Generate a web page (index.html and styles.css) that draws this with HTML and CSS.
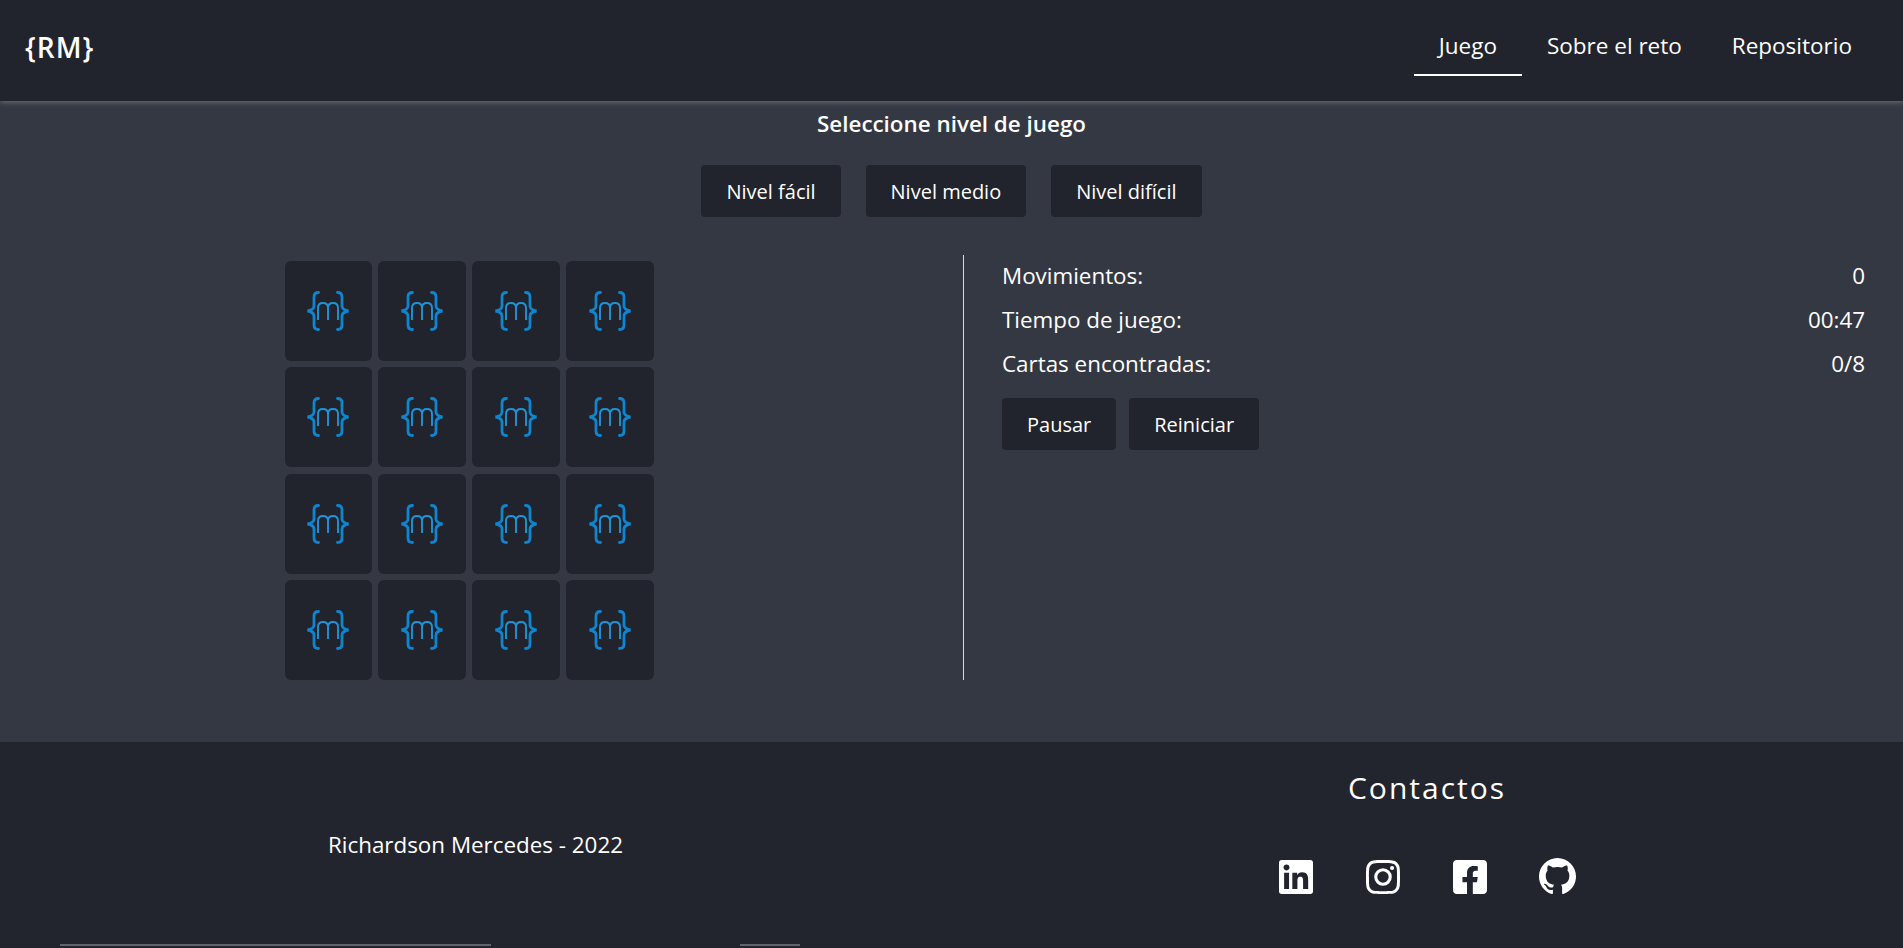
FILE: index.html
```html
<!DOCTYPE html>
<html lang="es">

<head>
    <meta charset="UTF-8">
    <meta name="viewport" content="width=device-width, initial-scale=1.0">
    <title>Juego de memoria</title>
    <link rel="stylesheet" href="styles.css">
</head>

<body>
    <header class="navbar">
        <a class="brand" href="#">{RM}</a>
        <nav class="nav-links">
            <a class="nav-link active" href="#">Juego</a>
            <a class="nav-link" href="#">Sobre el reto</a>
            <a class="nav-link" href="#">Repositorio</a>
        </nav>
    </header>

    <main class="content">
        <h1 class="level-title">Seleccione nivel de juego</h1>
        <div class="level-buttons">
            <button class="btn">Nivel fácil</button>
            <button class="btn">Nivel medio</button>
            <button class="btn">Nivel difícil</button>
        </div>

        <section class="game">
            <div class="board-side">
                <div class="board" id="board"></div>
            </div>
            <div class="stats-side">
                <div class="stat"><span>Movimientos:</span><span>0</span></div>
                <div class="stat"><span>Tiempo de juego:</span><span>00:47</span></div>
                <div class="stat"><span>Cartas encontradas:</span><span>0/8</span></div>
                <div class="stat-buttons">
                    <button class="btn">Pausar</button>
                    <button class="btn">Reiniciar</button>
                </div>
            </div>
        </section>
    </main>

    <footer class="footer">
        <div class="footer-left">
            <p>Richardson Mercedes - 2022</p>
        </div>
        <div class="footer-right">
            <h2 class="contact-title">Contactos</h2>
            <div class="socials">
                <a href="#" aria-label="LinkedIn">
                    <svg viewBox="0 0 24 24"><path d="M22.2 0H1.8C.8 0 0 .8 0 1.7v20.6C0 23.2.8 24 1.8 24h20.4c1 0 1.8-.8 1.8-1.7V1.7C24 .8 23.2 0 22.2 0zM7.1 20.5H3.6V9h3.5v11.5zM5.300 7.400c-1.100 0-2.100-.9-2.100-2.100s.9-2.100 2.100-2.100 2.100.9 2.100 2.100-1 2.100-2.100 2.100zm15.200 13.100H17v-5.600c0-1.300 0-3-1.900-3s-2.100 1.400-2.100 2.900v5.700H9.400V9h3.400v1.600h.1c.5-.9 1.600-1.900 3.400-1.900 3.600 0 4.300 2.400 4.300 5.500v6.300z"/></svg>
                </a>
                <a href="#" aria-label="Instagram">
                    <svg viewBox="0 0 24 24"><path d="M12 2.200c3.200 0 3.600 0 4.900.1 1.200.1 1.800.2 2.200.4.6.2 1 .5 1.400.9.4.4.7.8.9 1.400.2.4.4 1 .4 2.200.1 1.300.1 1.700.1 4.900s0 3.600-.1 4.900c-.1 1.200-.2 1.800-.4 2.200-.2.6-.5 1-.9 1.400-.4.4-.8.7-1.400.9-.4.2-1 .4-2.200.4-1.300.1-1.700.1-4.900.1s-3.600 0-4.900-.1c-1.200-.1-1.800-.2-2.200-.4-.6-.2-1-.5-1.400-.9-.4-.4-.7-.8-.9-1.400-.2-.4-.4-1-.4-2.200-.1-1.300-.1-1.700-.1-4.900s0-3.600.1-4.900c.1-1.200.2-1.800.4-2.200.2-.6.5-1 .9-1.400.4-.4.8-.7 1.400-.9.4-.2 1-.4 2.200-.4 1.300-.1 1.700-.1 4.900-.1zM12 0C8.700 0 8.300 0 7.100.1 5.800.1 4.900.3 4.100.6c-.8.3-1.500.7-2.100 1.400C1.300 2.600.9 3.300.6 4.100.3 4.900.1 5.800.1 7.100 0 8.300 0 8.700 0 12s0 3.700.1 4.900c.1 1.300.2 2.200.5 3 .3.8.7 1.500 1.400 2.100.7.7 1.300 1.100 2.100 1.400.8.3 1.700.5 3 .5 1.200.1 1.600.1 4.900.1s3.700 0 4.900-.1c1.300-.1 2.200-.2 3-.5.8-.3 1.500-.7 2.100-1.400.7-.7 1.100-1.300 1.400-2.100.3-.8.5-1.700.5-3 .1-1.200.1-1.600.1-4.900s0-3.700-.1-4.900c-.1-1.300-.2-2.200-.5-3-.3-.8-.7-1.500-1.400-2.100-.7-.7-1.300-1.100-2.100-1.400-.8-.3-1.700-.5-3-.5C15.700 0 15.300 0 12 0z"/><path d="M12 5.800a6.200 6.200 0 1 0 0 12.400 6.200 6.200 0 0 0 0-12.400zM12 16a4 4 0 1 1 0-8 4 4 0 0 1 0 8z"/><circle cx="18.4" cy="5.600" r="1.450"/></svg>
                </a>
                <a href="#" aria-label="Facebook">
                    <svg viewBox="0 0 24 24"><path d="M21.300 0H2.700C1.200 0 0 1.200 0 2.700v18.600C0 22.800 1.200 24 2.700 24h7.200v-8.300H6.700V12h3.200V9.200c0-3.200 1.900-4.900 4.800-4.900 1.400 0 2.800.2 2.800.2v3.100H16c-1.600 0-2 1-2 2V12h3.500l-.6 3.700H14V24h7.300c1.500 0 2.700-1.200 2.700-2.700V2.700C24 1.200 22.800 0 21.300 0z"/></svg>
                </a>
                <a href="#" aria-label="GitHub">
                    <svg class="icon-github" viewBox="0 0 16 16"><path d="M8 0C3.580 0 0 3.580 0 8c0 3.540 2.290 6.530 5.470 7.590.4.070.55-.17.55-.38 0-.19-.01-.82-.01-1.490-2.010.37-2.530-.49-2.690-.94-.09-.23-.48-.94-.82-1.130-.28-.15-.68-.52-.01-.53.63-.01 1.080.58 1.230.82.72 1.210 1.870.87 2.330.66.07-.52.28-.87.51-1.070-1.780-.2-3.640-.89-3.640-3.950 0-.87.31-1.590.82-2.150-.08-.2-.36-1.020.08-2.120 0 0 .67-.21 2.200.82.64-.18 1.320-.27 2-.27s1.360.09 2 .27c1.530-1.040 2.200-.82 2.200-.82.44 1.100.16 1.920.08 2.120.51.56.82 1.270.82 2.150 0 3.070-1.870 3.750-3.650 3.950.29.25.54.73.54 1.480 0 1.070-.01 1.930-.01 2.200 0 .21.15.46.55.38A8.010 8.010 0 0 0 16 8c0-4.420-3.580-8-8-8z"/></svg>
                </a>
            </div>
        </div>
    </footer>

    <div class="page-end">
        <span class="end-bar end-bar-long"></span>
        <span class="end-bar end-bar-short"></span>
    </div>

    <template id="cardTemplate">
        <div class="card">
            <svg class="card-logo" viewBox="0 0 44 40">
                <path class="brace" d="M12.500 1.500c-3 0-4.500 1.500-4.500 4.500v9c0 2.500-2 4.200-6.500 5 4.500.8 6.500 2.500 6.500 5v9c0 3 1.500 4.500 4.500 4.500"/>
                <path class="brace" d="M31.500 1.500c3 0 4.500 1.500 4.500 4.500v9c0 2.500 2 4.200 6.500 5-4.500.8-6.500 2.500-6.500 5v9c0 3-1.500 4.500-4.500 4.500"/>
                <path class="letter" d="M12 29V17c0-3.500 2-5 5-5s5 1.500 5 5v12M22 17c0-3.500 2-5 5-5s5 1.500 5 5v12"/>
            </svg>
        </div>
    </template>

    <script>
        var board = document.getElementById('board');
        var cardTemplate = document.getElementById('cardTemplate');

        for (var i = 0; i < 16; i++) {
            board.appendChild(cardTemplate.content.cloneNode(true));
        }
    </script>
</body>

</html>
```

FILE: styles.css
```css
* {
    box-sizing: border-box;
    margin: 0;
}

html,
body {
    background-color: #23252e;
}

body {
    color: white;
    font-family: "Open Sans", "Noto Sans", sans-serif;
    font-size: 22.4px;
    height: 948px;
    overflow: hidden;
}

a {
    color: white;
    text-decoration: none;
}

.navbar {
    align-items: center;
    background-color: #21242c;
    box-shadow: 0 1px 6px rgba(255, 255, 255, 0.3);
    display: flex;
    height: 101px;
    justify-content: space-between;
    padding: 0 26px 7px 25px;
    position: relative;
}

.brand {
    font-size: 28px;
    font-weight: 600;
    letter-spacing: 1px;
}

.nav-links {
    display: flex;
}

.nav-link {
    border-bottom: 2px solid transparent;
    font-size: 22.5px;
    line-height: 30px;
    padding: 13px 25px;
}

.nav-link.active {
    border-bottom-color: white;
}

.content {
    background-color: #343843;
    height: 641px;
    padding-top: 8px;
}

.level-title {
    font-size: 22.4px;
    font-weight: 600;
    line-height: 30px;
    text-align: center;
}

.level-buttons {
    display: flex;
    gap: 25px;
    justify-content: center;
    margin-top: 26px;
}

.btn {
    background-color: #21242c;
    border: none;
    border-radius: 4px;
    color: white;
    font-family: inherit;
    font-size: 20px;
    height: 52px;
    padding: 0 25px;
}

.game {
    display: flex;
    margin-top: 38px;
}

.board-side {
    border-right: 1px solid #d8d8d8;
    height: 425px;
    padding: 6px 0 0 284.5px;
    width: 964px;
}

.board {
    display: grid;
    gap: 6.4px;
    grid-template-columns: repeat(4, 87.6px);
    grid-template-rows: repeat(4, 100px);
}

.card {
    align-items: center;
    background-color: #21242c;
    border-radius: 6px;
    display: flex;
    justify-content: center;
}

.card-logo {
    fill: none;
    height: 40px;
    stroke: #0f85cf;
    width: 44px;
}

.brace {
    stroke-linecap: round;
    stroke-width: 2.800;
}

.letter {
    stroke: #1f93d8;
    stroke-width: 1.900;
}

.stats-side {
    flex: 1;
    padding: 6px 38px 0 38px;
}

.stat {
    display: flex;
    justify-content: space-between;
    line-height: 30px;
    margin-bottom: 14px;
}

.stat-buttons {
    display: flex;
    gap: 13px;
    padding-top: 5px;
}

.footer {
    background-color: #23252e;
    display: flex;
    height: 204px;
}

.footer-left {
    align-items: center;
    display: flex;
    height: 204px;
    justify-content: center;
    width: 951px;
}

.footer-right {
    flex: 1;
    text-align: center;
}

.contact-title {
    font-size: 30px;
    font-weight: 400;
    letter-spacing: 2px;
    line-height: 38px;
    margin-top: 27px;
}

.socials {
    align-items: center;
    display: flex;
    gap: 53px;
    justify-content: center;
    margin-top: 51px;
    padding-left: 1px;
}

.socials svg {
    display: block;
    fill: white;
    height: 34px;
    width: 34px;
}

.socials .icon-github {
    height: 37px;
    margin-left: -1px;
    width: 37px;
}

.page-end {
    display: flex;
    height: 2px;
    margin-top: -2px;
    padding-left: 60px;
    position: relative;
}

.end-bar {
    background-color: #63656c;
    display: block;
    height: 2px;
}

.end-bar-long {
    width: 431px;
}

.end-bar-short {
    margin-left: 249px;
    width: 60px;
}
```
